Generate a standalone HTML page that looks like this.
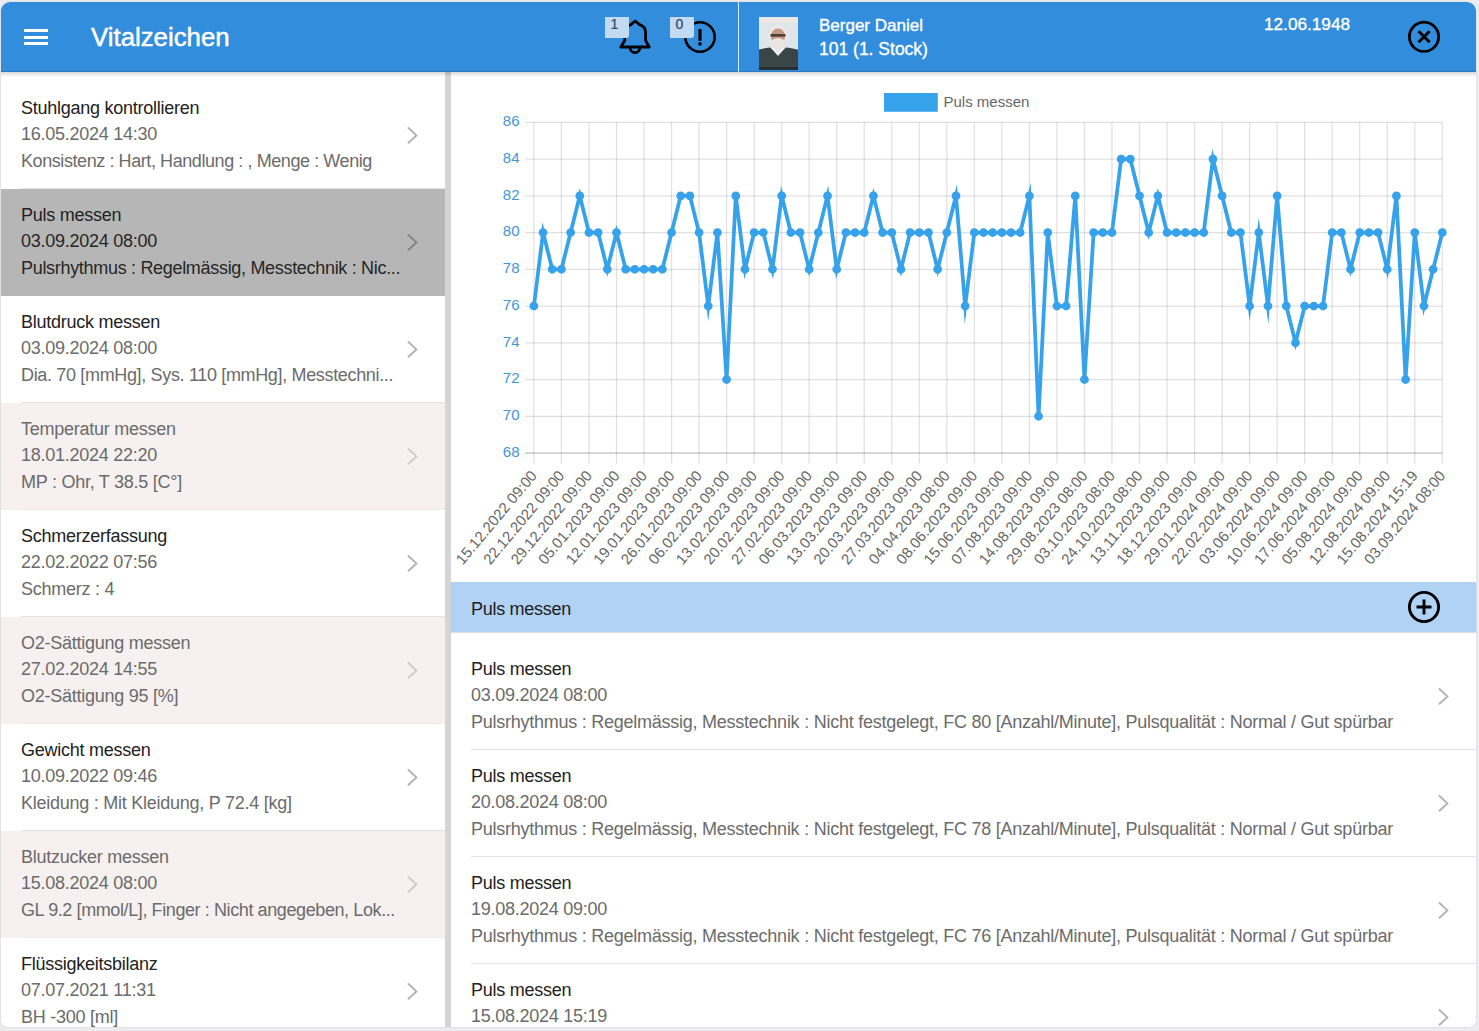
<!DOCTYPE html>
<html><head><meta charset="utf-8">
<style>
*{box-sizing:border-box;margin:0;padding:0}
html,body{width:1479px;height:1031px;overflow:hidden;background:#ececef;font-family:"Liberation Sans",sans-serif}
.abs{position:absolute}
#card{position:absolute;left:1px;top:2px;width:1475px;height:1025px;border-radius:9px 9px 7px 7px;background:#fff;overflow:hidden;box-shadow:0 0 0 1px #e2e2e2}
#hdr{position:absolute;left:1px;top:2px;width:1475px;height:70px;background:#338ddd;border-radius:9px 9px 0 0;box-shadow:inset 0 -1px 0 rgba(0,0,0,0.15)}
#hdrsep{position:absolute;left:738px;top:2px;width:1px;height:70px;background:#c8f0ff}
.bar{position:absolute;left:24px;width:24px;height:3px;background:#fff}
#title{position:absolute;left:91px;top:22px;font-size:25.8px;color:#fff;line-height:30px;white-space:nowrap;-webkit-text-stroke:0.5px #fff}
.badge{position:absolute;top:17px;width:24px;height:21px;background:#c3daf3;border-radius:0 0 3px 0;color:#2c4866;font-size:14px;line-height:15px;padding-left:5.5px;-webkit-text-stroke:0.2px #2c4866}
.htx{position:absolute;color:#fff;white-space:nowrap;font-size:17px;line-height:20px}
#photo{position:absolute;left:759px;top:17px;width:39px;height:53px;overflow:hidden;background:#dfe8ee}
#vbar{position:absolute;left:445px;top:72px;width:6px;height:955px;background:#d5d5d5}
.it{position:absolute;left:1px;width:444px;height:107px;color:#6b6b6b}
.it::after{content:"";position:absolute;left:20px;right:0;bottom:0;height:1px;background:#e2e2e2}
.it .t1{color:#222}
.it.sel{background:#b6b6b6;color:#262626}
.it.sel::after{display:none}
.it.pk{background:#f6f0f0}
.it.pk::after{background:#efe9e9}
.it.pk .t1{color:#6b6b6b}
.t1,.t2,.t3{position:absolute;left:20px;font-size:18px;letter-spacing:-0.25px;line-height:20px;white-space:nowrap}
.t1{top:15.6px}.t2{top:41.8px}.t3{top:68.7px}
.rit{position:absolute;left:451px;width:1025px;height:107px;color:#6b6b6b}
.rit::after{content:"";position:absolute;left:20px;right:0;bottom:0;height:1px;background:#e2e2e2}
.rit .t1{color:#222}
.chev{position:absolute}
#sec{position:absolute;left:451px;top:582px;width:1025px;height:50px;background:#b0d2f4;box-shadow:0 1px 1px rgba(0,0,0,0.12)}
#sec .tx{position:absolute;left:20px;top:16.8px;font-size:18px;letter-spacing:-0.28px;line-height:20px;color:#1e1e1e}
.chart{position:absolute;left:0;top:0}
#hdrshadow{position:absolute;left:1px;top:72px;width:1475px;height:6px;background:linear-gradient(rgba(0,0,0,0.16),rgba(0,0,0,0.04) 60%,rgba(0,0,0,0))}
</style></head>
<body>
<div id="card"></div>

<!-- left list -->
<div id="left">
<div class="it" style="top:82px"><div class="t1">Stuhlgang kontrollieren</div><div class="t2">16.05.2024 14:30</div><div class="t3" style="letter-spacing:-0.42px">Konsistenz : Hart, Handlung : , Menge : Wenig</div></div>
<svg class="chev" style="left:405px;top:126px" width="14" height="20" viewBox="0 0 14 20"><polyline points="3.5,2 11.4,9.4 3.5,16.8" fill="none" stroke="#b2b2b2" stroke-width="1.9" stroke-linecap="round"/></svg>
<div class="it sel" style="top:189px"><div class="t1">Puls messen</div><div class="t2">03.09.2024 08:00</div><div class="t3" style="letter-spacing:-0.31px">Pulsrhythmus : Regelmässig, Messtechnik : Nic...</div></div>
<svg class="chev" style="left:405px;top:233px" width="14" height="20" viewBox="0 0 14 20"><polyline points="3.5,2 11.4,9.4 3.5,16.8" fill="none" stroke="#838383" stroke-width="1.9" stroke-linecap="round"/></svg>
<div class="it" style="top:296px"><div class="t1">Blutdruck messen</div><div class="t2">03.09.2024 08:00</div><div class="t3" style="letter-spacing:-0.34px">Dia. 70 [mmHg], Sys. 110 [mmHg], Messtechni...</div></div>
<svg class="chev" style="left:405px;top:340px" width="14" height="20" viewBox="0 0 14 20"><polyline points="3.5,2 11.4,9.4 3.5,16.8" fill="none" stroke="#b2b2b2" stroke-width="1.9" stroke-linecap="round"/></svg>
<div class="it pk" style="top:403px"><div class="t1">Temperatur messen</div><div class="t2">18.01.2024 22:20</div><div class="t3">MP : Ohr, T 38.5 [C°]</div></div>
<svg class="chev" style="left:405px;top:447px" width="14" height="20" viewBox="0 0 14 20"><polyline points="3.5,2 11.4,9.4 3.5,16.8" fill="none" stroke="#cdcdcd" stroke-width="1.9" stroke-linecap="round"/></svg>
<div class="it" style="top:510px"><div class="t1">Schmerzerfassung</div><div class="t2">22.02.2022 07:56</div><div class="t3">Schmerz : 4</div></div>
<svg class="chev" style="left:405px;top:554px" width="14" height="20" viewBox="0 0 14 20"><polyline points="3.5,2 11.4,9.4 3.5,16.8" fill="none" stroke="#b2b2b2" stroke-width="1.9" stroke-linecap="round"/></svg>
<div class="it pk" style="top:617px"><div class="t1">O2-Sättigung messen</div><div class="t2">27.02.2024 14:55</div><div class="t3">O2-Sättigung 95 [%]</div></div>
<svg class="chev" style="left:405px;top:661px" width="14" height="20" viewBox="0 0 14 20"><polyline points="3.5,2 11.4,9.4 3.5,16.8" fill="none" stroke="#cdcdcd" stroke-width="1.9" stroke-linecap="round"/></svg>
<div class="it" style="top:724px"><div class="t1">Gewicht messen</div><div class="t2">10.09.2022 09:46</div><div class="t3">Kleidung : Mit Kleidung, P 72.4 [kg]</div></div>
<svg class="chev" style="left:405px;top:768px" width="14" height="20" viewBox="0 0 14 20"><polyline points="3.5,2 11.4,9.4 3.5,16.8" fill="none" stroke="#b2b2b2" stroke-width="1.9" stroke-linecap="round"/></svg>
<div class="it pk" style="top:831px"><div class="t1">Blutzucker messen</div><div class="t2">15.08.2024 08:00</div><div class="t3" style="letter-spacing:-0.40px">GL 9.2 [mmol/L], Finger : Nicht angegeben, Lok...</div></div>
<svg class="chev" style="left:405px;top:875px" width="14" height="20" viewBox="0 0 14 20"><polyline points="3.5,2 11.4,9.4 3.5,16.8" fill="none" stroke="#cdcdcd" stroke-width="1.9" stroke-linecap="round"/></svg>
<div class="it" style="top:938px"><div class="t1">Flüssigkeitsbilanz</div><div class="t2">07.07.2021 11:31</div><div class="t3">BH -300 [ml]</div></div>
<svg class="chev" style="left:405px;top:982px" width="14" height="20" viewBox="0 0 14 20"><polyline points="3.5,2 11.4,9.4 3.5,16.8" fill="none" stroke="#b2b2b2" stroke-width="1.9" stroke-linecap="round"/></svg>
</div>
<div id="vbar"></div>

<!-- chart -->
<svg class="chart" width="1479" height="1031" viewBox="0 0 1479 1031">
<rect x="885.9" y="94.9" width="50" height="15" fill="rgb(54,162,235)" stroke="rgb(54,162,235)" stroke-width="3.75"/>
<text x="943.5" y="107" font-family="Liberation Sans, sans-serif" font-size="15" fill="#666">Puls messen</text>
<g stroke="rgba(0,0,0,0.12)" stroke-width="1.25"><line x1="525" y1="453.00" x2="1442.30" y2="453.00"/><line x1="525" y1="416.26" x2="1442.30" y2="416.26"/><line x1="525" y1="379.51" x2="1442.30" y2="379.51"/><line x1="525" y1="342.77" x2="1442.30" y2="342.77"/><line x1="525" y1="306.02" x2="1442.30" y2="306.02"/><line x1="525" y1="269.28" x2="1442.30" y2="269.28"/><line x1="525" y1="232.53" x2="1442.30" y2="232.53"/><line x1="525" y1="195.79" x2="1442.30" y2="195.79"/><line x1="525" y1="159.04" x2="1442.30" y2="159.04"/><line x1="525" y1="122.30" x2="1442.30" y2="122.30"/><line x1="533.90" y1="122.30" x2="533.90" y2="463.5"/><line x1="561.43" y1="122.30" x2="561.43" y2="463.5"/><line x1="588.95" y1="122.30" x2="588.95" y2="463.5"/><line x1="616.48" y1="122.30" x2="616.48" y2="463.5"/><line x1="644.01" y1="122.30" x2="644.01" y2="463.5"/><line x1="671.54" y1="122.30" x2="671.54" y2="463.5"/><line x1="699.06" y1="122.30" x2="699.06" y2="463.5"/><line x1="726.59" y1="122.30" x2="726.59" y2="463.5"/><line x1="754.12" y1="122.30" x2="754.12" y2="463.5"/><line x1="781.65" y1="122.30" x2="781.65" y2="463.5"/><line x1="809.17" y1="122.30" x2="809.17" y2="463.5"/><line x1="836.70" y1="122.30" x2="836.70" y2="463.5"/><line x1="864.23" y1="122.30" x2="864.23" y2="463.5"/><line x1="891.75" y1="122.30" x2="891.75" y2="463.5"/><line x1="919.28" y1="122.30" x2="919.28" y2="463.5"/><line x1="946.81" y1="122.30" x2="946.81" y2="463.5"/><line x1="974.34" y1="122.30" x2="974.34" y2="463.5"/><line x1="1001.86" y1="122.30" x2="1001.86" y2="463.5"/><line x1="1029.39" y1="122.30" x2="1029.39" y2="463.5"/><line x1="1056.92" y1="122.30" x2="1056.92" y2="463.5"/><line x1="1084.45" y1="122.30" x2="1084.45" y2="463.5"/><line x1="1111.97" y1="122.30" x2="1111.97" y2="463.5"/><line x1="1139.50" y1="122.30" x2="1139.50" y2="463.5"/><line x1="1167.03" y1="122.30" x2="1167.03" y2="463.5"/><line x1="1194.55" y1="122.30" x2="1194.55" y2="463.5"/><line x1="1222.08" y1="122.30" x2="1222.08" y2="463.5"/><line x1="1249.61" y1="122.30" x2="1249.61" y2="463.5"/><line x1="1277.14" y1="122.30" x2="1277.14" y2="463.5"/><line x1="1304.66" y1="122.30" x2="1304.66" y2="463.5"/><line x1="1332.19" y1="122.30" x2="1332.19" y2="463.5"/><line x1="1359.72" y1="122.30" x2="1359.72" y2="463.5"/><line x1="1387.25" y1="122.30" x2="1387.25" y2="463.5"/><line x1="1414.77" y1="122.30" x2="1414.77" y2="463.5"/><line x1="1442.30" y1="122.30" x2="1442.30" y2="463.5"/></g>
<line x1="525" y1="453.00" x2="1442.30" y2="453.00" stroke="rgba(0,0,0,0.12)" stroke-width="1.5"/>
<g font-family="Liberation Sans, sans-serif" font-size="15" fill="#4295d8" text-anchor="end"><text x="519.5" y="456.90">68</text><text x="519.5" y="420.16">70</text><text x="519.5" y="383.41">72</text><text x="519.5" y="346.67">74</text><text x="519.5" y="309.92">76</text><text x="519.5" y="273.18">78</text><text x="519.5" y="236.43">80</text><text x="519.5" y="199.69">82</text><text x="519.5" y="162.94">84</text><text x="519.5" y="126.20">86</text></g>
<g font-family="Liberation Sans, sans-serif" font-size="15" fill="#666" text-anchor="end"><text transform="translate(537.70,476) rotate(-50)">15.12.2022 09:00</text><text transform="translate(565.23,476) rotate(-50)">22.12.2022 09:00</text><text transform="translate(592.75,476) rotate(-50)">29.12.2022 09:00</text><text transform="translate(620.28,476) rotate(-50)">05.01.2023 09:00</text><text transform="translate(647.81,476) rotate(-50)">12.01.2023 09:00</text><text transform="translate(675.34,476) rotate(-50)">19.01.2023 09:00</text><text transform="translate(702.86,476) rotate(-50)">26.01.2023 09:00</text><text transform="translate(730.39,476) rotate(-50)">06.02.2023 09:00</text><text transform="translate(757.92,476) rotate(-50)">13.02.2023 09:00</text><text transform="translate(785.45,476) rotate(-50)">20.02.2023 09:00</text><text transform="translate(812.97,476) rotate(-50)">27.02.2023 09:00</text><text transform="translate(840.50,476) rotate(-50)">06.03.2023 09:00</text><text transform="translate(868.03,476) rotate(-50)">13.03.2023 09:00</text><text transform="translate(895.55,476) rotate(-50)">20.03.2023 09:00</text><text transform="translate(923.08,476) rotate(-50)">27.03.2023 09:00</text><text transform="translate(950.61,476) rotate(-50)">04.04.2023 08:00</text><text transform="translate(978.14,476) rotate(-50)">08.06.2023 09:00</text><text transform="translate(1005.66,476) rotate(-50)">15.06.2023 09:00</text><text transform="translate(1033.19,476) rotate(-50)">07.08.2023 09:00</text><text transform="translate(1060.72,476) rotate(-50)">14.08.2023 09:00</text><text transform="translate(1088.25,476) rotate(-50)">29.08.2023 08:00</text><text transform="translate(1115.77,476) rotate(-50)">03.10.2023 08:00</text><text transform="translate(1143.30,476) rotate(-50)">24.10.2023 08:00</text><text transform="translate(1170.83,476) rotate(-50)">13.11.2023 09:00</text><text transform="translate(1198.35,476) rotate(-50)">18.12.2023 09:00</text><text transform="translate(1225.88,476) rotate(-50)">29.01.2024 09:00</text><text transform="translate(1253.41,476) rotate(-50)">22.02.2024 09:00</text><text transform="translate(1280.94,476) rotate(-50)">03.06.2024 09:00</text><text transform="translate(1308.46,476) rotate(-50)">10.06.2024 09:00</text><text transform="translate(1335.99,476) rotate(-50)">17.06.2024 09:00</text><text transform="translate(1363.52,476) rotate(-50)">05.08.2024 09:00</text><text transform="translate(1391.05,476) rotate(-50)">12.08.2024 09:00</text><text transform="translate(1418.57,476) rotate(-50)">15.08.2024 15:19</text><text transform="translate(1446.10,476) rotate(-50)">03.09.2024 08:00</text></g>
<polyline points="533.90,306.02 543.08,232.53 552.25,269.28 561.43,269.28 570.60,232.53 579.78,195.79 588.95,232.53 598.13,232.53 607.31,269.28 616.48,232.53 625.66,269.28 634.83,269.28 644.01,269.28 653.18,269.28 662.36,269.28 671.54,232.53 680.71,195.79 689.89,195.79 699.06,232.53 708.24,306.02 717.42,232.53 726.59,379.51 735.77,195.79 744.94,269.28 754.12,232.53 763.29,232.53 772.47,269.28 781.65,195.79 790.82,232.53 800.00,232.53 809.17,269.28 818.35,232.53 827.52,195.79 836.70,269.28 845.88,232.53 855.05,232.53 864.23,232.53 873.40,195.79 882.58,232.53 891.75,232.53 900.93,269.28 910.11,232.53 919.28,232.53 928.46,232.53 937.63,269.28 946.81,232.53 955.98,195.79 965.16,306.02 974.34,232.53 983.51,232.53 992.69,232.53 1001.86,232.53 1011.04,232.53 1020.22,232.53 1029.39,195.79 1038.57,416.26 1047.74,232.53 1056.92,306.02 1066.09,306.02 1075.27,195.79 1084.45,379.51 1093.62,232.53 1102.80,232.53 1111.97,232.53 1121.15,159.04 1130.32,159.04 1139.50,195.79 1148.68,232.53 1157.85,195.79 1167.03,232.53 1176.20,232.53 1185.38,232.53 1194.55,232.53 1203.73,232.53 1212.91,159.04 1222.08,195.79 1231.26,232.53 1240.43,232.53 1249.61,306.02 1258.78,232.53 1267.96,306.02 1277.14,195.79 1286.31,306.02 1295.49,342.77 1304.66,306.02 1313.84,306.02 1323.02,306.02 1332.19,232.53 1341.37,232.53 1350.54,269.28 1359.72,232.53 1368.89,232.53 1378.07,232.53 1387.25,269.28 1396.42,195.79 1405.60,379.51 1414.77,232.53 1423.95,306.02 1433.12,269.28 1442.30,232.53" fill="none" stroke="rgb(54,162,235)" stroke-width="3.75" stroke-linejoin="miter" stroke-miterlimit="10"/>
<g fill="rgb(54,162,235)" stroke="rgb(54,162,235)" stroke-width="1.25"><circle cx="533.90" cy="306.02" r="3.75"/><circle cx="543.08" cy="232.53" r="3.75"/><circle cx="552.25" cy="269.28" r="3.75"/><circle cx="561.43" cy="269.28" r="3.75"/><circle cx="570.60" cy="232.53" r="3.75"/><circle cx="579.78" cy="195.79" r="3.75"/><circle cx="588.95" cy="232.53" r="3.75"/><circle cx="598.13" cy="232.53" r="3.75"/><circle cx="607.31" cy="269.28" r="3.75"/><circle cx="616.48" cy="232.53" r="3.75"/><circle cx="625.66" cy="269.28" r="3.75"/><circle cx="634.83" cy="269.28" r="3.75"/><circle cx="644.01" cy="269.28" r="3.75"/><circle cx="653.18" cy="269.28" r="3.75"/><circle cx="662.36" cy="269.28" r="3.75"/><circle cx="671.54" cy="232.53" r="3.75"/><circle cx="680.71" cy="195.79" r="3.75"/><circle cx="689.89" cy="195.79" r="3.75"/><circle cx="699.06" cy="232.53" r="3.75"/><circle cx="708.24" cy="306.02" r="3.75"/><circle cx="717.42" cy="232.53" r="3.75"/><circle cx="726.59" cy="379.51" r="3.75"/><circle cx="735.77" cy="195.79" r="3.75"/><circle cx="744.94" cy="269.28" r="3.75"/><circle cx="754.12" cy="232.53" r="3.75"/><circle cx="763.29" cy="232.53" r="3.75"/><circle cx="772.47" cy="269.28" r="3.75"/><circle cx="781.65" cy="195.79" r="3.75"/><circle cx="790.82" cy="232.53" r="3.75"/><circle cx="800.00" cy="232.53" r="3.75"/><circle cx="809.17" cy="269.28" r="3.75"/><circle cx="818.35" cy="232.53" r="3.75"/><circle cx="827.52" cy="195.79" r="3.75"/><circle cx="836.70" cy="269.28" r="3.75"/><circle cx="845.88" cy="232.53" r="3.75"/><circle cx="855.05" cy="232.53" r="3.75"/><circle cx="864.23" cy="232.53" r="3.75"/><circle cx="873.40" cy="195.79" r="3.75"/><circle cx="882.58" cy="232.53" r="3.75"/><circle cx="891.75" cy="232.53" r="3.75"/><circle cx="900.93" cy="269.28" r="3.75"/><circle cx="910.11" cy="232.53" r="3.75"/><circle cx="919.28" cy="232.53" r="3.75"/><circle cx="928.46" cy="232.53" r="3.75"/><circle cx="937.63" cy="269.28" r="3.75"/><circle cx="946.81" cy="232.53" r="3.75"/><circle cx="955.98" cy="195.79" r="3.75"/><circle cx="965.16" cy="306.02" r="3.75"/><circle cx="974.34" cy="232.53" r="3.75"/><circle cx="983.51" cy="232.53" r="3.75"/><circle cx="992.69" cy="232.53" r="3.75"/><circle cx="1001.86" cy="232.53" r="3.75"/><circle cx="1011.04" cy="232.53" r="3.75"/><circle cx="1020.22" cy="232.53" r="3.75"/><circle cx="1029.39" cy="195.79" r="3.75"/><circle cx="1038.57" cy="416.26" r="3.75"/><circle cx="1047.74" cy="232.53" r="3.75"/><circle cx="1056.92" cy="306.02" r="3.75"/><circle cx="1066.09" cy="306.02" r="3.75"/><circle cx="1075.27" cy="195.79" r="3.75"/><circle cx="1084.45" cy="379.51" r="3.75"/><circle cx="1093.62" cy="232.53" r="3.75"/><circle cx="1102.80" cy="232.53" r="3.75"/><circle cx="1111.97" cy="232.53" r="3.75"/><circle cx="1121.15" cy="159.04" r="3.75"/><circle cx="1130.32" cy="159.04" r="3.75"/><circle cx="1139.50" cy="195.79" r="3.75"/><circle cx="1148.68" cy="232.53" r="3.75"/><circle cx="1157.85" cy="195.79" r="3.75"/><circle cx="1167.03" cy="232.53" r="3.75"/><circle cx="1176.20" cy="232.53" r="3.75"/><circle cx="1185.38" cy="232.53" r="3.75"/><circle cx="1194.55" cy="232.53" r="3.75"/><circle cx="1203.73" cy="232.53" r="3.75"/><circle cx="1212.91" cy="159.04" r="3.75"/><circle cx="1222.08" cy="195.79" r="3.75"/><circle cx="1231.26" cy="232.53" r="3.75"/><circle cx="1240.43" cy="232.53" r="3.75"/><circle cx="1249.61" cy="306.02" r="3.75"/><circle cx="1258.78" cy="232.53" r="3.75"/><circle cx="1267.96" cy="306.02" r="3.75"/><circle cx="1277.14" cy="195.79" r="3.75"/><circle cx="1286.31" cy="306.02" r="3.75"/><circle cx="1295.49" cy="342.77" r="3.75"/><circle cx="1304.66" cy="306.02" r="3.75"/><circle cx="1313.84" cy="306.02" r="3.75"/><circle cx="1323.02" cy="306.02" r="3.75"/><circle cx="1332.19" cy="232.53" r="3.75"/><circle cx="1341.37" cy="232.53" r="3.75"/><circle cx="1350.54" cy="269.28" r="3.75"/><circle cx="1359.72" cy="232.53" r="3.75"/><circle cx="1368.89" cy="232.53" r="3.75"/><circle cx="1378.07" cy="232.53" r="3.75"/><circle cx="1387.25" cy="269.28" r="3.75"/><circle cx="1396.42" cy="195.79" r="3.75"/><circle cx="1405.60" cy="379.51" r="3.75"/><circle cx="1414.77" cy="232.53" r="3.75"/><circle cx="1423.95" cy="306.02" r="3.75"/><circle cx="1433.12" cy="269.28" r="3.75"/><circle cx="1442.30" cy="232.53" r="3.75"/></g>
</svg>

<div id="sec"><div class="tx">Puls messen</div></div>
<svg class="abs" style="left:0;top:0" width="1479" height="1031">
<circle cx="1424" cy="607" r="14.6" fill="none" stroke="#000" stroke-width="2.9"/>
<path d="M1416.5 607H1431.5M1424 599.5V614.5" stroke="#000" stroke-width="2.9"/>
</svg>

<div id="right">
<div class="rit" style="top:643px"><div class="t1">Puls messen</div><div class="t2">03.09.2024 08:00</div><div class="t3">Pulsrhythmus : Regelmässig, Messtechnik : Nicht festgelegt, FC 80 [Anzahl/Minute], Pulsqualität : Normal / Gut spürbar</div></div>
<svg class="chev" style="left:1436px;top:687px" width="14" height="20" viewBox="0 0 14 20"><polyline points="3.5,2 11.4,9.4 3.5,16.8" fill="none" stroke="#b2b2b2" stroke-width="1.9" stroke-linecap="round"/></svg>
<div class="rit" style="top:750px"><div class="t1">Puls messen</div><div class="t2">20.08.2024 08:00</div><div class="t3">Pulsrhythmus : Regelmässig, Messtechnik : Nicht festgelegt, FC 78 [Anzahl/Minute], Pulsqualität : Normal / Gut spürbar</div></div>
<svg class="chev" style="left:1436px;top:794px" width="14" height="20" viewBox="0 0 14 20"><polyline points="3.5,2 11.4,9.4 3.5,16.8" fill="none" stroke="#b2b2b2" stroke-width="1.9" stroke-linecap="round"/></svg>
<div class="rit" style="top:857px"><div class="t1">Puls messen</div><div class="t2">19.08.2024 09:00</div><div class="t3">Pulsrhythmus : Regelmässig, Messtechnik : Nicht festgelegt, FC 76 [Anzahl/Minute], Pulsqualität : Normal / Gut spürbar</div></div>
<svg class="chev" style="left:1436px;top:901px" width="14" height="20" viewBox="0 0 14 20"><polyline points="3.5,2 11.4,9.4 3.5,16.8" fill="none" stroke="#b2b2b2" stroke-width="1.9" stroke-linecap="round"/></svg>
<div class="rit" style="top:964px"><div class="t1">Puls messen</div><div class="t2">15.08.2024 15:19</div><div class="t3">Pulsrhythmus : Regelmässig, Messtechnik : Nicht festgelegt, FC 76 [Anzahl/Minute], Pulsqualität : Normal / Gut spürbar</div></div>
<svg class="chev" style="left:1436px;top:1008px" width="14" height="20" viewBox="0 0 14 20"><polyline points="3.5,2 11.4,9.4 3.5,16.8" fill="none" stroke="#b2b2b2" stroke-width="1.9" stroke-linecap="round"/></svg>
</div>

<!-- header -->
<div id="hdr"></div>
<div id="hdrshadow"></div>
<div id="hdrsep"></div>
<div class="bar" style="top:29px"></div>
<div class="bar" style="top:35.8px"></div>
<div class="bar" style="top:42px"></div>
<div id="title">Vitalzeichen</div>

<svg class="abs" style="left:0;top:0" width="1479" height="72">
<path d="M620.8 47H649.2L645.6 40.5V32.5C645.6 28 642.6 25.6 639.6 24.6L635.2 21L630.8 24.6C627.8 25.6 624.8 28 624.8 32.5V40.5Z" fill="none" stroke="#000" stroke-width="2.8" stroke-linejoin="round"/>
<path d="M630 47.6A5 5 0 0 0 640 47.6" fill="none" stroke="#000" stroke-width="2.7"/>
<circle cx="700" cy="37" r="14.7" fill="none" stroke="#000" stroke-width="2.6"/>
<rect x="698.4" y="29" width="3.2" height="11.8" fill="#000"/>
<circle cx="700" cy="43.9" r="1.8" fill="#000"/>
<circle cx="1424" cy="36.8" r="14.6" fill="none" stroke="#000" stroke-width="2.8"/>
<path d="M1418.6 31.2L1429.6 42.2M1429.6 31.2L1418.6 42.2" stroke="#000" stroke-width="3"/>
</svg>
<div class="badge" style="left:605px">1</div>
<div class="badge" style="left:670px">0</div>

<div class="abs" style="left:759px;top:17px;width:39px;height:53px;overflow:hidden;background:#dfe6ea">
<svg width="39" height="53" viewBox="0 0 39 53" style="display:block;filter:blur(0.7px)">
<rect x="-3" y="-3" width="45" height="60" fill="#dfe6ea"/>
<rect x="-3" y="-3" width="45" height="9" fill="#ece8e6"/>
<ellipse cx="19" cy="19" rx="9.5" ry="11.5" fill="#ebe7e6"/>
<ellipse cx="19" cy="19.5" rx="7" ry="8" fill="#c49684"/>
<rect x="11.5" y="17" width="15" height="2.6" fill="#4f3d33"/>
<ellipse cx="19" cy="27" rx="7.8" ry="6" fill="#e9e5e1"/>
<path d="M-4 56V34C0 32 7 31 11.5 30.5L19 37L26.5 30.5C32 31 38 32 43 34V56Z" fill="#3a4645"/>
<path d="M11.5 30.5L19 39L26.5 30.5L24 30.5L19 35.5L14 30.5Z" fill="#f2f2f2"/>
<rect x="-3" y="50" width="45" height="6" fill="#263034"/>
</svg></div>
<div class="htx" style="left:819px;top:16px;font-size:17px;-webkit-text-stroke:0.35px #fff">Berger Daniel</div>
<div class="htx" style="left:819px;top:38.5px;font-size:17.5px;-webkit-text-stroke:0.35px #fff">101 (1. Stock)</div>
<div class="htx" style="left:1264px;top:14px;font-size:17.2px;-webkit-text-stroke:0.35px #fff">12.06.1948</div>
</body></html>
